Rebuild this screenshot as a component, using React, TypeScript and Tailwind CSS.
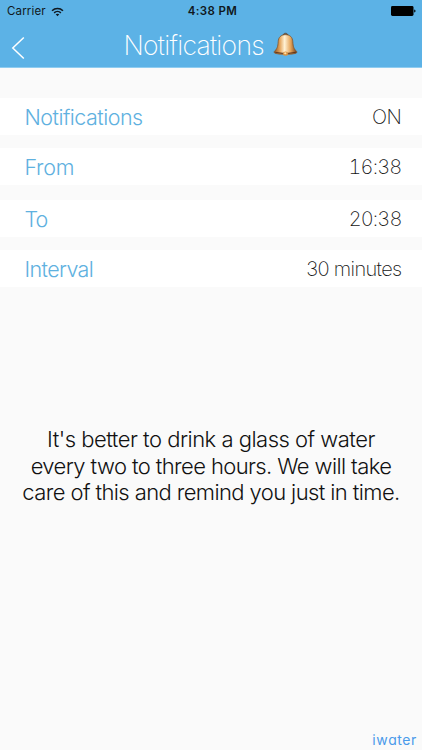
import React from 'react';

const rows = [
  { label: 'Notifications', value: 'ON', labelClass: 'tracking-[-0.52px]', valueClass: 'tracking-[-0.4px]', gap: 'mt-[30px]' },
  { label: 'From', value: '16:38', labelClass: 'tracking-[-0.3px]', valueClass: 'tracking-[-0.8px] tabular-nums', gap: 'mt-[13px]' },
  { label: 'To', value: '20:38', labelClass: 'tracking-[-0.9px]', valueClass: 'tracking-[-0.85px] tabular-nums', gap: 'mt-[15px]' },
  { label: 'Interval', value: '30 minutes', labelClass: 'tracking-[-0.62px]', valueClass: 'tracking-[-0.65px]', gap: 'mt-[13px]' },
];

function Bell() {
  return (
    <svg viewBox="0 0 26 26" preserveAspectRatio="none" className="ml-[9px] h-[25px] w-[25px]">
      <defs>
        <linearGradient id="brass" x1="0" x2="1" y1="0" y2="0">
          <stop offset="0" stopColor="#8e5423" />
          <stop offset="0.25" stopColor="#e3a45b" />
          <stop offset="0.46" stopColor="#fff2d5" />
          <stop offset="0.72" stopColor="#e5a65c" />
          <stop offset="1" stopColor="#6e3a16" />
        </linearGradient>
      </defs>
      <path d="M10.4 4.2C10.2 2.5 11.4 1.3 13 1.3s2.8 1.2 2.6 2.9" fill="#77604c" stroke="#54483e" strokeWidth="0.9" />
      <path
        d="M13 2.8C8 2.8 5.6 5.8 5.4 10C5.1 15.6 4.1 17.5 1.7 19.9c-1 .8-.5 2 1 2.4c5.5 1.4 15.1 1.4 20.6 0c1.5-.4 2-1.6 1-2.4C21.9 17.5 20.9 15.6 20.6 10C20.4 5.8 18 2.8 13 2.8Z"
        fill="url(#brass)"
        stroke="#80552b"
        strokeWidth="0.8"
      />
      <path d="M1.9 20.6c5 1.5 17.2 1.5 22.2 0c-1 2.8-21.2 2.8-22.2 0Z" fill="#4c2510" />
      <ellipse cx="13" cy="22.5" rx="2.7" ry="2.3" fill="#d99343" />
      <ellipse cx="12.8" cy="22.1" rx="1.2" ry="1" fill="#ffe2a9" />
    </svg>
  );
}

function StatusBar() {
  return (
    <div className="grid h-[22px] grid-cols-3 items-center pl-[7px] pr-[6px] text-[11.5px] text-[#101820]">
      <div className="flex items-center pt-px">
        <span className="tracking-[0.15px]">Carrier</span>
        <svg viewBox="0 0 14 11" className="ml-[5px] h-[10px] w-[13px]" fill="none" stroke="#101820" strokeWidth="1.7">
          <path d="M1 4.1C4.3.8 9.7.8 13 4.1" />
          <path d="M3.3 6.5c2.1-2 5.3-2 7.4 0" />
          <path d="M5 8.1c1.2-1 2.8-1 4 0L7 10.3Z" fill="#101820" stroke="none" />
        </svg>
      </div>
      <span className="pl-[2px] pt-[2px] text-center font-semibold tracking-[0.4px]">4:38 PM</span>
      <svg viewBox="0 0 25 10" className="h-[10px] w-[25px] justify-self-end" fill="#000">
        <rect width="22.5" height="10" rx="1.4" />
        <path d="M23.2 3.4c1.8.3 1.8 2.9 0 3.2Z" />
      </svg>
    </div>
  );
}

export default function App() {
  return (
    <div className="flex h-[750px] w-[422px] flex-col overflow-hidden bg-[#fafafa] font-['Inter',sans-serif]">
      {/* Header */}
      <header className="h-[68px] border-b border-[#8fccf0] bg-[#5cb2e6]">
        <StatusBar />
        <div className="grid h-[45px] grid-cols-[123.5px_1fr] items-center">
          <button className="pl-[11px] pt-[6px]" aria-label="Back">
            <svg viewBox="0 0 14 24" className="h-[24px] w-[14px]" fill="none" stroke="#fff" strokeWidth="1.5">
              <path d="M12.8 1.5 1.8 12l11 10.5" />
            </svg>
          </button>
          <div className="flex items-center">
            <h1 className="text-[26.5px] font-extralight leading-[44px] tracking-[-0.73px] text-white">Notifications</h1>
            <Bell />
          </div>
        </div>
      </header>

      {/* Settings */}
      <main className="flex-1">
        {rows.map((row) => (
          <div key={row.label} className={`flex h-[37px] items-center justify-between bg-white pl-[24.5px] pr-[20.5px] pt-px ${row.gap}`}>
            <span className={`text-[21.5px] font-light text-[#60b1df] ${row.labelClass}`}>{row.label}</span>
            <span className={`text-[20px] font-extralight text-[#151515] ${row.valueClass}`}>{row.value}</span>
          </div>
        ))}
        <p className="mt-[139px] text-center text-[22px] font-light leading-[26.5px] text-[#111]">
          <span className="block tracking-[-0.5px]">It's better to drink a glass of water</span>
          <span className="block tracking-[-0.6px]">every two to three hours. We will take</span>
          <span className="block tracking-[-0.6px]">care of this and remind you just in time.</span>
        </p>
      </main>

      <footer className="flex h-[22px] items-center justify-end pr-[5px]">
        <span className="text-[14px] font-normal tracking-[0.6px] text-[#4b9bea] [font-feature-settings:'cv11']">iwater</span>
      </footer>
    </div>
  );
}
